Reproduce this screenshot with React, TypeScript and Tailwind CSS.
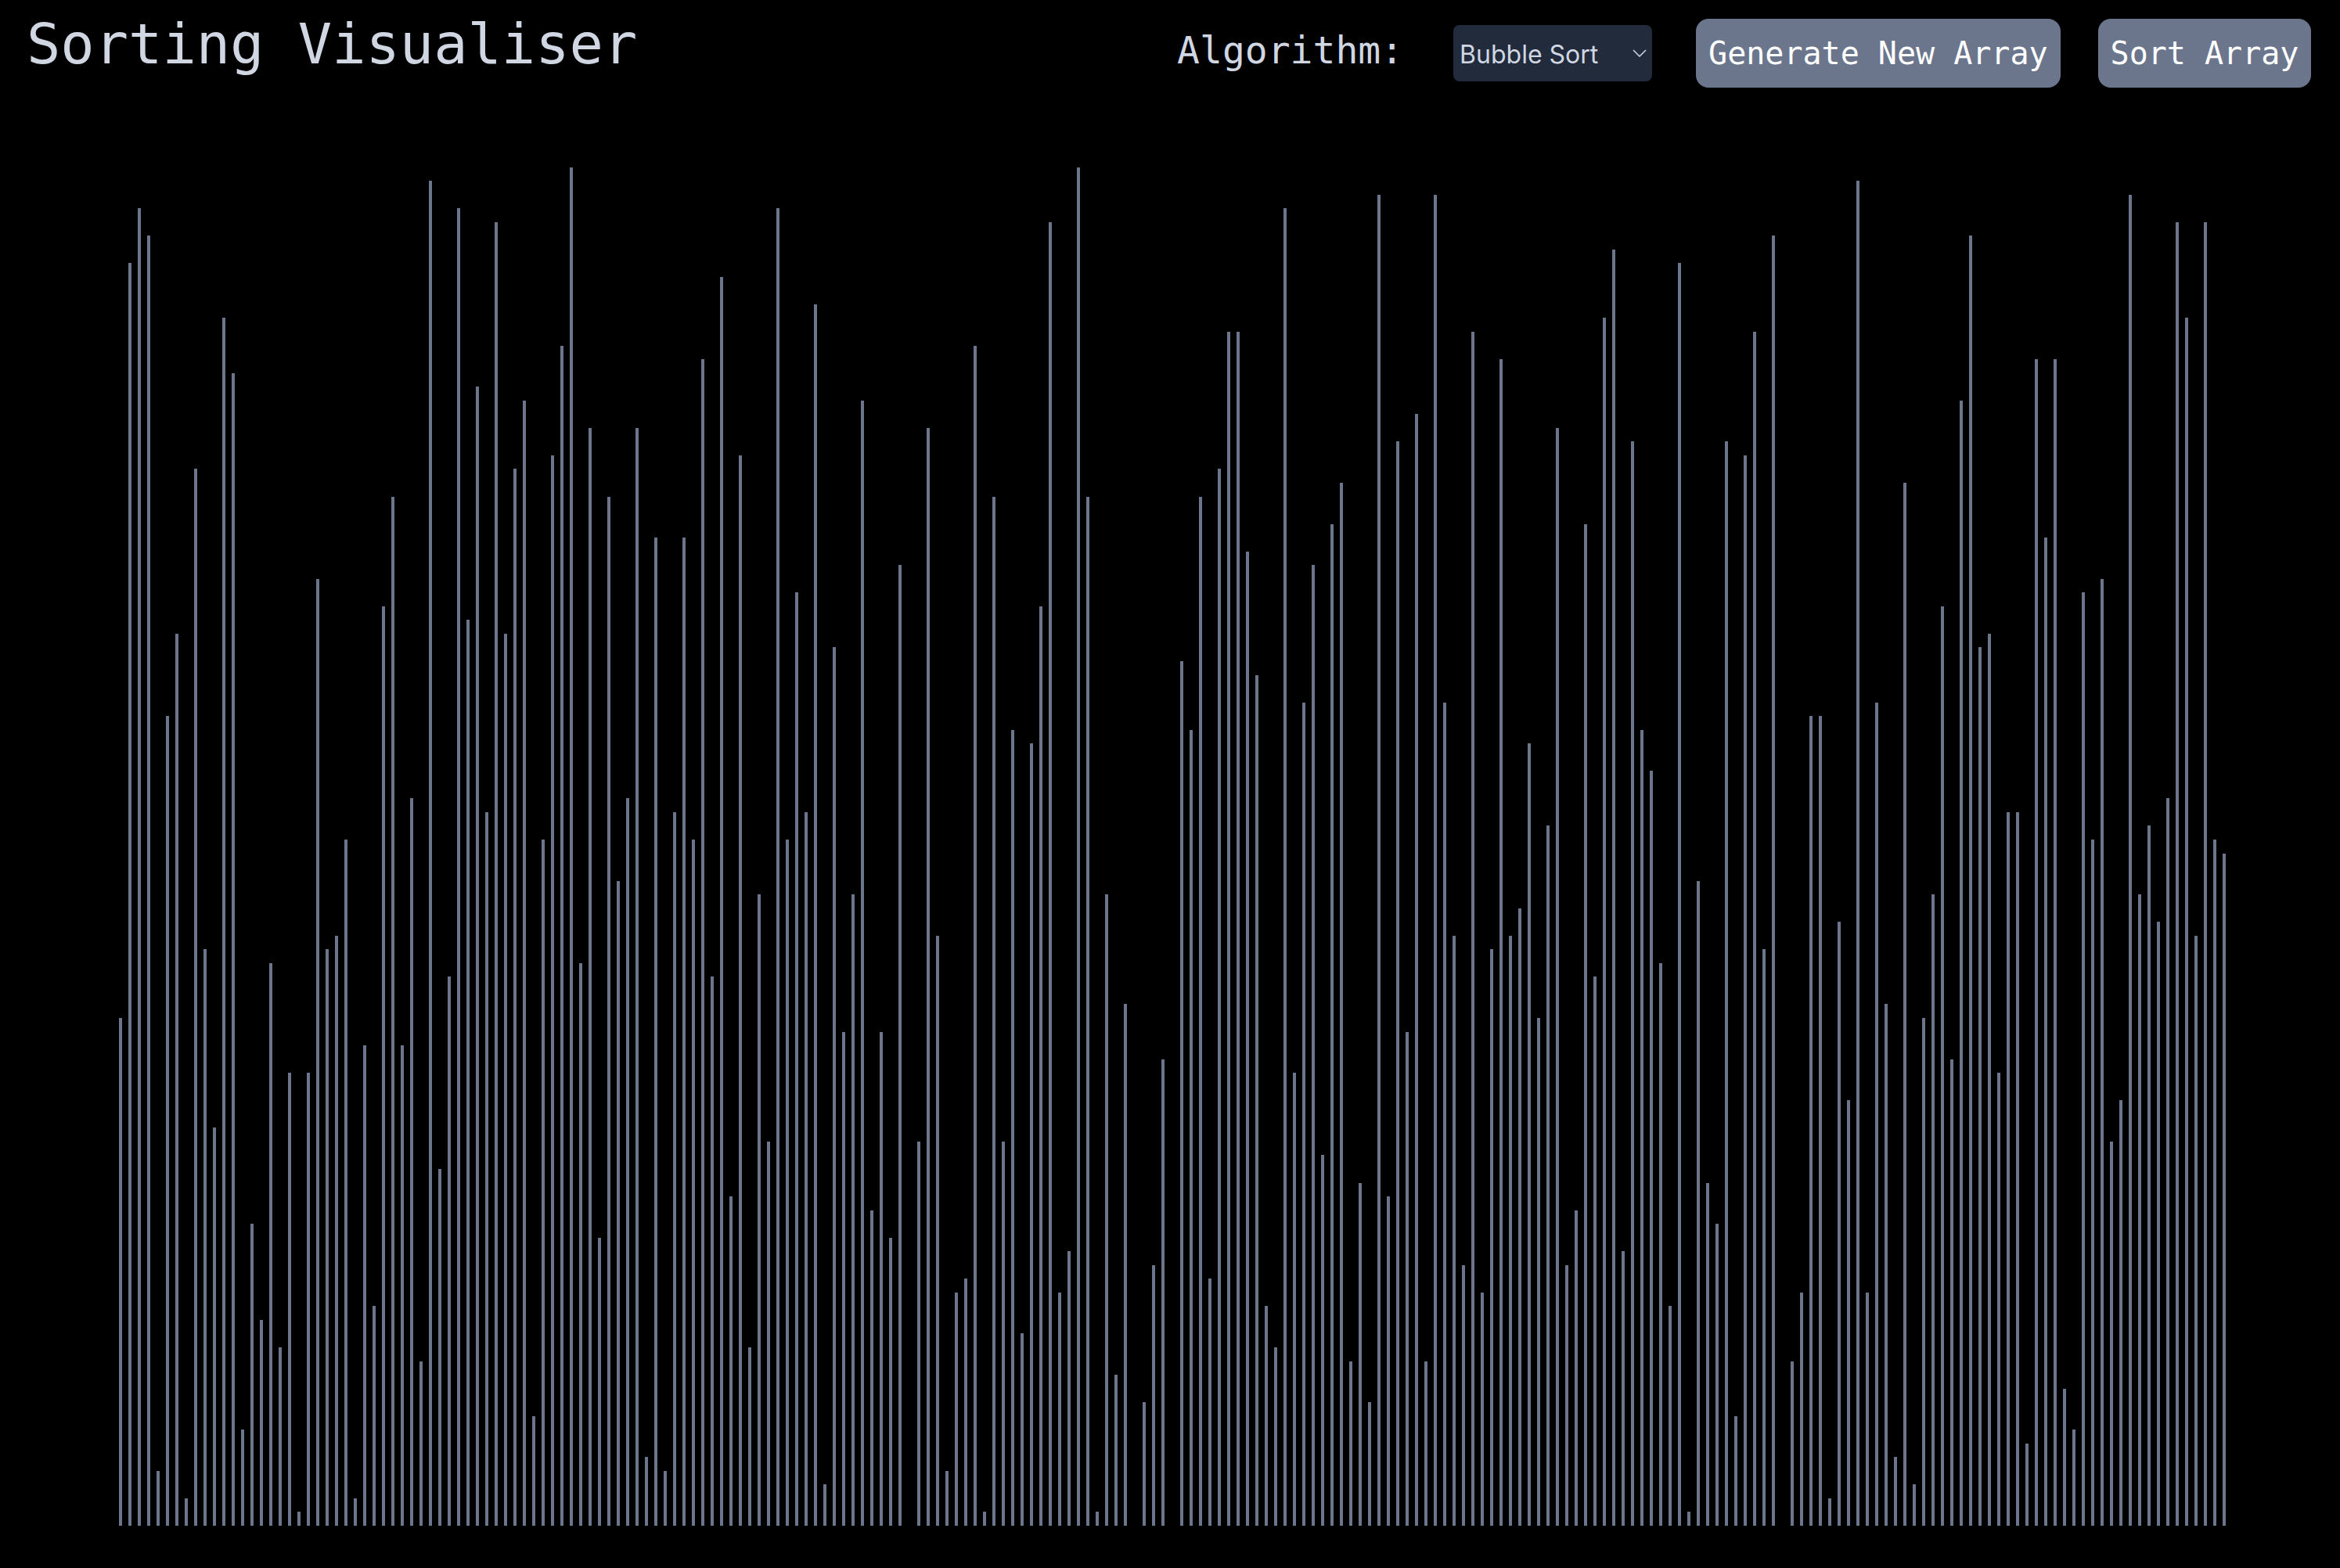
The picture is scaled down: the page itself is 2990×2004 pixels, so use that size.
const values = [
  37, 92, 96, 94, 4, 59, 65, 2, 77, 42, 29, 88, 84, 7, 22, 15, 41, 13, 33, 1, 33, 69, 42, 43, 50, 2, 35, 16, 67, 75, 35, 53, 12, 98, 26, 40, 96, 66, 83, 52, 95, 65, 77, 82, 8,
  50, 78, 86, 99, 41, 80, 21, 75, 47, 53, 80, 5, 72, 4, 52, 72, 50, 85, 40, 91, 24, 78, 13, 46, 28, 96, 50, 68, 52, 89, 3, 64, 36, 46, 82, 23, 36, 21, 70, 0, 28, 80, 43, 4, 17,
  18, 86, 1, 75, 28, 58, 14, 57, 67, 95, 17, 20, 99, 75, 1, 46, 11, 38, 0, 9, 19, 34, 0, 63, 58, 75, 18, 77, 87, 87, 71, 62, 16, 13, 96, 33, 60, 70, 27, 73, 76, 12, 25, 9, 97,
  24, 79, 36, 81, 12, 97, 60, 43, 19, 87, 17, 42, 85, 43, 45, 57, 37, 51, 80, 19, 23, 73, 40, 88, 93, 20, 79, 58, 55, 41, 16, 92, 1, 47, 25, 22, 79, 8, 78, 87, 42, 94, 0, 12, 17,
  59, 59, 2, 44, 31, 98, 17, 60, 38, 5, 76, 3, 37, 46, 67, 34, 82, 94, 64, 65, 33, 52, 52, 6, 85, 72, 85, 10, 7, 68, 50, 69, 28, 31, 97, 46, 51, 44, 53, 95, 88, 43, 95, 50, 49,
];

const mono = "font-['DejaVu_Sans_Mono',monospace]";

export default function App() {
  return (
    <div className="h-screen overflow-hidden bg-black">
      {/* Header */}
      <div className="flex h-[196px] items-start justify-between pl-[34px] pr-[36.6px] pt-6">
        <h1 className={`${mono} -mt-1 text-[72px] leading-[72px] text-[#d0d7e3]`}>Sorting Visualiser</h1>
        <div className="flex items-center">
          <label className={`${mono} pb-[8px] text-[48px] leading-[80px] text-[#d0d7e3]`}>Algorithm:</label>
          <div className="relative ml-16">
            <select
              defaultValue="bubble"
              className="block h-[72px] w-[254px] appearance-none rounded-lg bg-[#212b3b] pl-2 pt-[3px] font-['Inter',sans-serif] text-[32px] text-[#d0d7e3]"
            >
              <option value="bubble">Bubble Sort</option>
              <option value="merge">Merge Sort</option>
              <option value="quick">Quick Sort</option>
            </select>
            <svg
              className="pointer-events-none absolute right-[7px] top-[31px] h-[10px] w-[18px] text-[#d0d7e3]"
              viewBox="0 0 18 10"
              fill="none"
              stroke="currentColor"
              strokeWidth="1.5"
            >
              <path d="M1 1l8 8 8-8" />
            </svg>
          </div>
          <button className={`${mono} ml-14 h-[88px] rounded-2xl bg-[#6b768d] px-4 text-[40px] text-white`}>
            Generate New Array
          </button>
          <button className={`${mono} ml-12 h-[88px] rounded-2xl bg-[#6b768d] px-4 text-[40px] text-white`}>
            Sort Array
          </button>
        </div>
      </div>

      {/* Bars */}
      <div className="flex h-[1754px] items-end gap-2 pl-[152px]">
        {values.map((v, i) => (
          <div key={i} className="w-1 shrink-0 bg-[#6b768d]" style={{ height: `${v}%` }} />
        ))}
      </div>
    </div>
  );
}
